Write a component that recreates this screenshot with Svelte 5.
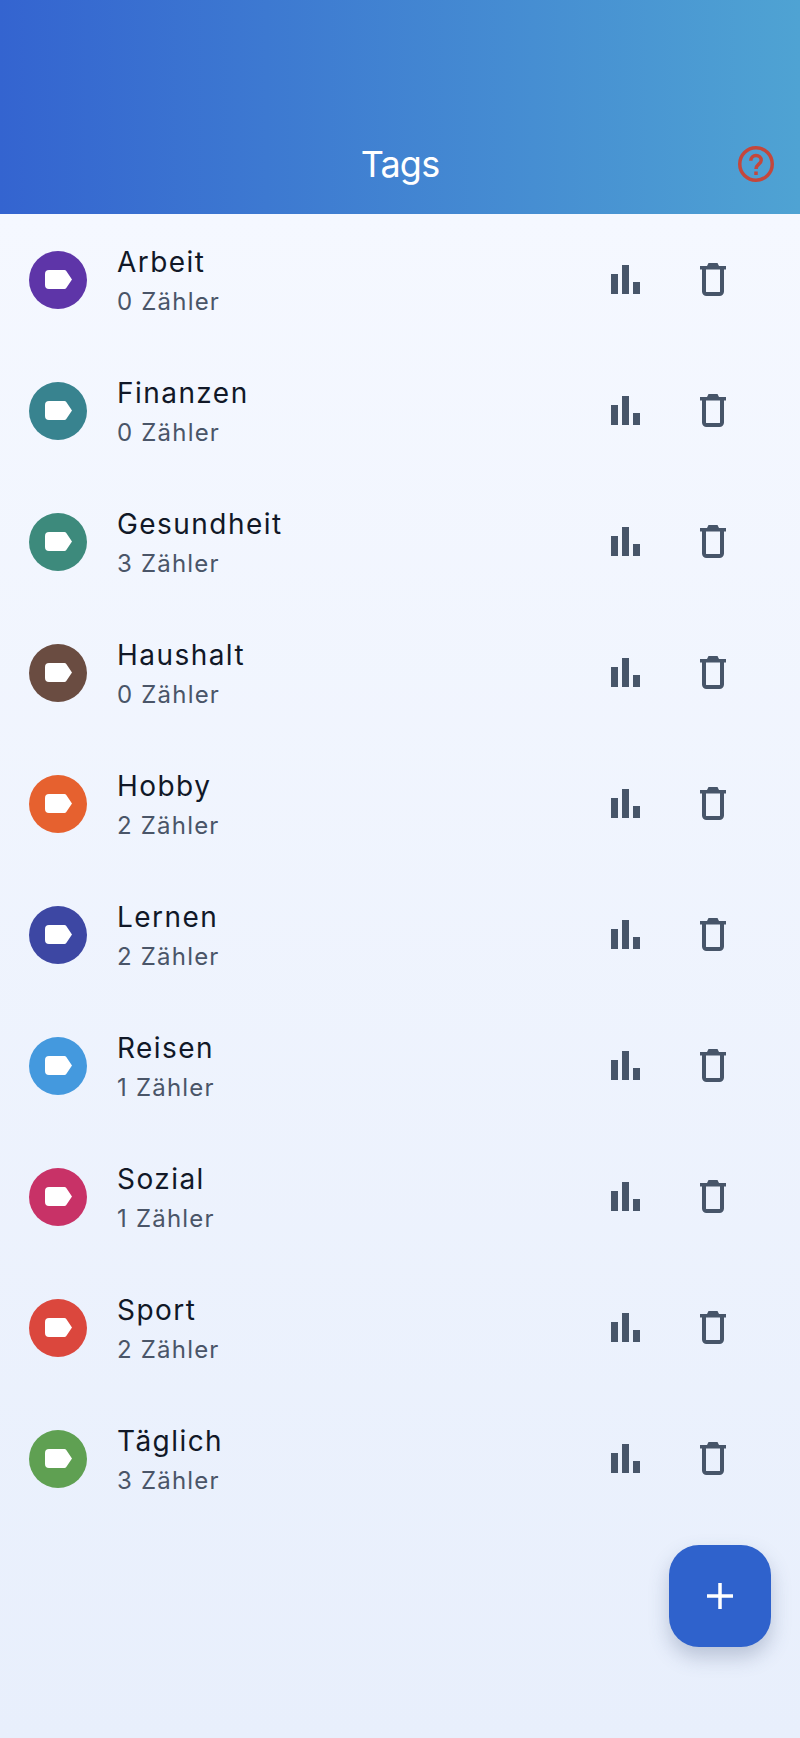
<script>
    const tags = [
        { name: "Arbeit", count: 0, color: "#5e35a8" },
        { name: "Finanzen", count: 0, color: "#38838f" },
        { name: "Gesundheit", count: 3, color: "#3d8a7c" },
        { name: "Haushalt", count: 0, color: "#6a4c41" },
        { name: "Hobby", count: 2, color: "#e6612f" },
        { name: "Lernen", count: 2, color: "#3d47a3" },
        { name: "Reisen", count: 1, color: "#4499de" },
        { name: "Sozial", count: 1, color: "#c83267" },
        { name: "Sport", count: 2, color: "#db473d" },
        { name: "Täglich", count: 3, color: "#5fa052" },
    ];
</script>

<div class="page">
    <header class="header">
        <h1 class="title">Tags</h1>
        <button class="help" aria-label="Hilfe">
            <svg width="38" height="38" viewBox="0 0 38 38" fill="none">
                <circle cx="19" cy="19" r="16.25" stroke="#c4473c" stroke-width="3.5" />
                <path d="M13.8 15.800c0-3.200 2.300-5.300 5.200-5.300s5.200 2 5.200 4.700c0 3.800-5.200 4.200-5.200 8.800" stroke="#c4473c" stroke-width="3.500" />
                <rect x="17.250" y="26.500" width="3.500" height="3.500" fill="#c4473c" />
            </svg>
        </button>
    </header>

    <ul class="list">
        {#each tags as tag}
            <li class="row">
                <div class="badge" style="background: {tag.color}">
                    <svg width="27" height="19" viewBox="0 0 27 19">
                        <path d="M4 0h15.500a2 2 0 0 1 1.600 .8L27 9.500l-5.900 8.700a2 2 0 0 1-1.600 .8H4a4 4 0 0 1-4-4V4a4 4 0 0 1 4-4z" fill="#fff" />
                    </svg>
                </div>
                <div class="text">
                    <div class="name">{tag.name}</div>
                    <div class="count">{tag.count} Zähler</div>
                </div>
                <button class="action stats" aria-label="Statistik">
                    <svg width="29" height="29" viewBox="0 0 29 29" fill="#475569">
                        <rect x="0" y="9" width="7" height="20" />
                        <rect x="11" y="0" width="7" height="29" />
                        <rect x="22" y="17" width="7" height="12" />
                    </svg>
                </button>
                <button class="action trash" aria-label="Löschen">
                    <svg width="26" height="33" viewBox="0 0 26 33" fill="none">
                        <path d="M0 3h26v3.500H0z M7 3l1.500-3h9l1.500 3z" fill="#475569" />
                        <path d="M4 6v22.500a2.500 2.500 0 0 0 2.500 2.500h13a2.500 2.500 0 0 0 2.500-2.500V6" stroke="#475569" stroke-width="4" />
                    </svg>
                </button>
            </li>
        {/each}
    </ul>

    <button class="fab" aria-label="Hinzufügen">
        <svg width="26" height="26" viewBox="0 0 26 26">
            <path d="M11.250 0h3.500v11.250H26v3.500H14.750V26h-3.500V14.750H0v-3.500h11.250z" fill="#fff" />
        </svg>
    </button>
</div>

<style>
    :global(body) {
        margin: 0;
    }

    .page {
        position: relative;
        width: 800px;
        height: 1738px;
        overflow: hidden;
        background: linear-gradient(180deg, #f5f8ff 214px, #e8effc 100%);
        font-family: Inter, "Liberation Sans", sans-serif;
    }

    button {
        border: none;
        background: none;
        padding: 0;
        display: flex;
        align-items: center;
        justify-content: center;
    }

    .header {
        position: relative;
        height: 214px;
        box-sizing: border-box;
        padding-top: 141px;
        background: linear-gradient(90deg, #3464d0 0%, #4fa3d3 100%);
    }

    .title {
        margin: 0;
        text-align: center;
        color: #fff;
        font-size: 36px;
        line-height: 46px;
        font-weight: 400;
        letter-spacing: -0.8px;
    }

    .help {
        position: absolute;
        top: 145px;
        right: 25px;
    }

    .list {
        list-style: none;
        margin: 0;
        padding: 0;
    }

    .row {
        display: flex;
        align-items: center;
        height: 131px;
        padding-left: 29px;
    }

    .badge {
        width: 58px;
        height: 58px;
        border-radius: 50%;
        display: flex;
        align-items: center;
        justify-content: center;
        flex-shrink: 0;
    }

    .text {
        margin-left: 30px;
        padding-top: 3px;
        flex: 1;
    }

    .name {
        font-size: 28px;
        line-height: 36px;
        letter-spacing: 1.450px;
        color: #111827;
    }

    .count {
        margin-top: 5px;
        font-size: 24px;
        line-height: 34px;
        letter-spacing: 1.200px;
        color: #4a5568;
    }

    .action {
        flex-shrink: 0;
    }

    .stats {
        width: 29px;
    }

    .trash {
        width: 26px;
        margin-left: 60px;
        margin-right: 74px;
    }

    .fab {
        position: absolute;
        left: 669px;
        top: 1545px;
        width: 102px;
        height: 102px;
        border-radius: 30px;
        background: #2f62cc;
        box-shadow: 0 10px 20px rgba(60, 80, 120, 0.28);
    }
</style>
